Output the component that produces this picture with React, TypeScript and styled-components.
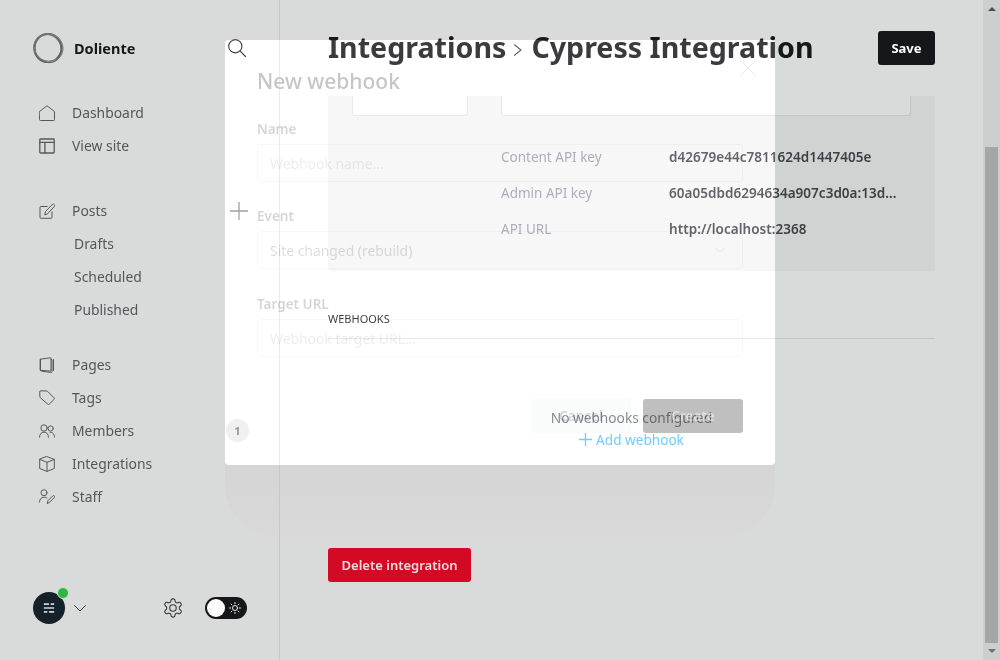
import React from "react";
import styled, { createGlobalStyle } from "styled-components";

const Global = createGlobalStyle`
  html, body { margin: 0; padding: 0; background: #d9dbda; overflow: hidden; }
  * { box-sizing: border-box; }
  body { font-family: "Noto Sans", "Open Sans", sans-serif; }
`;

const Shell = styled.div`
  width: 1000px; height: 660px; background: #d9dbda; overflow: hidden; position: relative;
`;
const ModalShadow = styled.div`
  position: absolute; left: 225px; top: 465px; width: 550px; height: 72px;
  border-radius: 0 0 52px 52px;
  background: linear-gradient(#d5d5d5, #d8d9d8);
`;
const Page = styled.div`
  position: relative; display: flex; width: 1000px; height: 660px;
`;
const Sidebar = styled.aside`
  width: 280px; height: 660px; border-right: 1px solid #c6c8c7;
  padding: 32px 31px 36px 32px; display: flex; flex-direction: column;
`;
const BrandRow = styled.div`
  display: flex; align-items: center; height: 32px; margin-bottom: 32px;
`;
const BrandName = styled.span`
  margin-left: 10px; font-size: 14.5px; font-weight: 700; color: #15171a; flex: 1;
`;
const SearchIcon = styled.svg`
  width: 18px; height: 18px; margin-right: 2px; color: #15171a;
`;
const NavGroup = styled.nav<{ $after?: number }>`
  display: flex; flex-direction: column; margin-bottom: ${p => p.$after ?? 0}px;
`;
const NavRow = styled.div`
  display: flex; align-items: center; height: 33px; padding-left: 7px;
  font-size: 13.9px; color: #53575c;
`;
const SubRow = styled.div`
  display: flex; align-items: center; height: 33px; padding-left: 42px;
  font-size: 13.9px; color: #53575c;
`;
const NavIcon = styled.svg`
  width: 16px; height: 16px; margin-right: 17px; flex: none; color: #54585d;
  fill: none; stroke: currentColor; stroke-width: 1; stroke-linecap: round; stroke-linejoin: round;
`;
const NavLabel = styled.span`flex: 1;`;
const PlusIcon = styled.svg`
  width: 18px; height: 18px; color: #7a7d80;
`;
const Badge = styled.span`
  width: 23px; height: 23px; margin-right: -1px; border-radius: 50%; background: #cacbcd; color: #6f7378;
  font-size: 11px; font-weight: 700; display: flex; align-items: center; justify-content: center;
`;
const Footer = styled.div`
  margin-top: auto; height: 32px; display: flex; align-items: center; position: relative;
`;
const Avatar = styled.div`
  width: 32px; height: 32px; margin-left: 1px; border-radius: 50%; background: #15212a; position: relative;
  display: flex; align-items: center; justify-content: center;
`;
const Online = styled.span`
  position: absolute; top: -5px; right: -4px; width: 12px; height: 12px; border-radius: 50%;
  background: #2db83d; border: 1px solid #d9dbda;
`;
const Chevron = styled.svg`
  width: 14px; height: 14px; margin-left: 8px; color: #3a3d40;
`;
const Gear = styled.svg`
  width: 22px; height: 22px; margin-left: 75px; color: #33363a;
`;
const Toggle = styled.div`
  width: 42px; height: 22px; margin-left: 21px; border-radius: 11px; background: #15171a;
  display: flex; align-items: center; padding: 2px 6px 2px 2px; justify-content: space-between;
`;
const Knob = styled.span`
  width: 18px; height: 18px; border-radius: 50%; background: #fff;
`;
const Sun = styled.svg`
  width: 12px; height: 12px; color: #e8e8e8;
`;

const Main = styled.main`
  flex: 1; min-width: 0; padding: 0 48px; display: flex; flex-direction: column;
`;
const Header = styled.header`
  height: 96px; display: flex; align-items: center; justify-content: space-between; flex: none;
`;
const Title = styled.h1`
  margin: -4px 0 0; font-size: 28.6px; font-weight: 700; color: #15171a; display: flex; align-items: center; white-space: nowrap;
`;
const Crumb = styled.svg`
  width: 12px; height: 12px; margin: 7px 7px 0 6px; color: #3a3d40;
`;
const SaveButton = styled.button`
  height: 34px; width: 57px; border: 0; border-radius: 3px; background: #15171a; color: #fff;
  font: 700 13px "Noto Sans", sans-serif; padding: 0;
`;
const Panel = styled.section`
  height: 175px; flex: none; padding: 0 24px; background: rgba(0,0,0,.035);
  border-radius: 0 0 3px 3px; display: grid; grid-template-columns: 116px 1fr; column-gap: 33px; align-content: start;
`;
const CutBox = styled.div`
  height: 20px; background: rgb(8,8,8); mix-blend-mode: plus-lighter;
  border-radius: 0 0 3px 3px;
`;
const CutEdge = styled.div`
  height: 20px; border: 1px solid #c3c5c4; border-top: 0; border-radius: 0 0 3px 3px;
  position: relative; margin-top: -20px;
`;
const Keys = styled.dl`
  grid-column: 2; margin: 23px 0 0; display: grid; grid-template-columns: 168px 1fr; grid-auto-rows: 36px; align-items: center;
`;
const KeyName = styled.dt`
  font-size: 13.5px; color: #858a96;
`;
const KeyValue = styled.dd`
  margin: 0; font-size: 13.5px; font-weight: 600; color: #3c3f44; white-space: nowrap; letter-spacing: .03px;
`;
const SectionHead = styled.div`
  margin-top: 41px; padding-bottom: 12px; border-bottom: 1px solid #c4c6c5;
  font-size: 11px; line-height: 14px; color: #15171a; flex: none;
`;
const Empty = styled.div`
  margin-top: 68px; display: flex; flex-direction: column; align-items: center; flex: none;
`;
const EmptyText = styled.div`
  height: 21px; line-height: 21px; font-size: 13.7px; color: #64696f;
`;
const AddLink = styled.div`
  height: 22px; display: flex; align-items: center; font-size: 13.6px; color: #48a8e4;
`;
const AddPlus = styled.svg`
  width: 13px; height: 13px; margin-right: 4px;
`;
const DeleteButton = styled.button`
  margin-top: 98px; height: 34px; width: 143px; flex: none; border: 0; border-radius: 3px; padding: 0 0 0 0;
  background: #d20a24; color: #ecdcdd; font: 600 13px "Noto Sans", sans-serif;
`;

const Scrollbar = styled.div`
  width: 17px; height: 660px; background: #cdcfce; flex: none; display: flex; flex-direction: column; align-items: center;
`;
const Arrow = styled.span<{ $down?: boolean }>`
  flex: none; width: 0; height: 0; margin-top: ${p => (p.$down ? 6 : 7)}px;
  border-left: 4px solid transparent; border-right: 4px solid transparent;
  ${p => (p.$down ? "border-top: 4px solid #6e6f6f;" : "border-bottom: 4px solid #4f5050;")}
`;
const Thumb = styled.div`
  width: 13px; height: 496px; margin-top: 136px; background: #a5a7a6; flex: none;
`;

const Modal = styled.div`
  position: absolute; left: 225px; top: 40px; width: 550px; height: 425px;
`;
const ModalGlow = styled.div`
  position: absolute; inset: 0; border-radius: 4px; background: rgb(38,36,37); mix-blend-mode: plus-lighter;
`;
const ModalBody = styled.div`
  position: absolute; inset: 0; padding: 26px 32px 32px; display: flex; flex-direction: column;
`;
const ModalTitle = styled.h2`
  margin: 0 0 23px; height: 30px; line-height: 30px; font-size: 21px; font-weight: 500; color: #c5c6c6;
`;
const CloseIcon = styled.svg`
  position: absolute; top: 20px; right: 19px; width: 16px; height: 16px; color: #e6e6e6;
`;
const Field = styled.div<{ $gap?: number }>`
  display: flex; flex-direction: column; margin-bottom: ${p => p.$gap ?? 24}px;
`;
const FieldLabel = styled.div`
  height: 20px; line-height: 20px; margin-bottom: 5px; font-size: 13.5px; font-weight: 600; color: rgba(0,0,0,.17);
`;
const FieldBox = styled.div<{ $strong?: boolean }>`
  height: 38px; border: 1px solid rgba(0,0,0,.03); border-radius: 3px; padding: 0 12px;
  display: flex; align-items: center; justify-content: space-between;
  font-size: 13.9px; color: ${p => (p.$strong ? "rgba(0,0,0,.14)" : "rgba(20,40,60,.09)")};
`;
const SelectChevron = styled.svg`
  width: 12px; height: 12px; margin-right: 4px; color: #e2e2e2;
`;
const ModalActions = styled.div`
  margin-top: auto; display: flex; justify-content: flex-end; gap: 12px;
`;
const CancelButton = styled.button`
  width: 100px; height: 34px; border: 0; border-radius: 3px; padding: 0; background: rgba(20,60,40,.02);
  color: rgba(0,20,20,.16); font: 600 13.5px "Noto Sans", sans-serif;
`;
const CreateButton = styled.button`
  width: 100px; height: 34px; border: 0; border-radius: 3px; padding: 0; background: rgba(0,0,0,.25);
  color: rgba(255,255,255,.5); font: 600 13.5px "Noto Sans", sans-serif;
`;

const Logo = () => (
  <svg width="32" height="32" viewBox="0 0 32 32" fill="none" style={{ flex: "none" }}>
    <ellipse cx="16" cy="16" rx="13.6" ry="14" stroke="#4f5152" strokeWidth="2.200" />
    <ellipse cx="16.4" cy="15.6" rx="14.4" ry="13.6" stroke="#808282" strokeWidth="1.400" transform="rotate(24 16 16)" />
    <ellipse cx="15.6" cy="16.4" rx="13" ry="14.600" stroke="#6c6e6e" strokeWidth="1" transform="rotate(-30 16 16)" />
  </svg>
);

const items = {
  home: <path d="M.5 6.6 8 .7l7.500 5.900v8.100a.8.8 0 0 1-.8.8H1.300a.8.8 0 0 1-.8-.8z" />,
  layout: <g strokeWidth="1.300"><rect x=".8" y="1" width="14.400" height="14" rx=".8" /><path d="M.8 4.300h14.400M5.900 4.300V15" /></g>,
  post: <g><path d="M8.200 3.500H2a1 1 0 0 0-1 1v9.800a1 1 0 0 0 1 1h10a1 1 0 0 0 1-1V8.800" /><path d="M5.800 11.500l.7-3L13.500 1.300a1 1 0 0 1 1.400 0l.6.6a1 1 0 0 1 0 1.400L8.600 10.700z" /></g>,
  page: <g><path d="M1.500 2.200 11 .8a.8.8 0 0 1 1 .8v12.500l-10.500-.8z" /><path d="M1.500 2.200v10.900a1 1 0 0 0 .9 1l9.300 1.400a1 1 0 0 0 1.300-1V3.300a1 1 0 0 0-1-1H11.900M14.500 2.500v11" /></g>,
  tag: <g><path d="M.7 1.800a1 1 0 0 1 1-1l5.800.2a2 2 0 0 1 1.300.6l6.300 6.300a1 1 0 0 1 0 1.400l-4.900 4.900a1 1 0 0 1-1.400 0L1.500 7.900A2 2 0 0 1 .9 6.600z" /></g>,
  members: <g><circle cx="5" cy="5" r="3.200" /><path d="M.5 14.200c0-3 1.800-5 4.500-5s4.500 2 4.500 5" /><circle cx="11.700" cy="5.500" r="2.600" /><path d="M11 9.300c2.600-.4 4.500 1.700 4.500 4.900" /></g>,
  cube: <g><path d="M8 .6l7.300 2.800v9.100L8 15.400.7 12.500V3.400z" /><path d="M.7 3.400 8 6.300l7.300-2.900M8 6.300v9.100" /></g>,
  staff: <g><circle cx="5" cy="3.700" r="3" /><path d="M.5 13c0-3 2-4.800 4.500-4.800 1.200 0 2.200.3 3 1" /><path d="M8.300 14.200l.6-2.400 4.900-4.900a1.100 1.100 0 0 1 1.600 1.600l-4.900 4.900z" /></g>,
};

const Item = ({ icon, label, children }: { icon: keyof typeof items; label: string; children?: React.ReactNode }) => (
  <NavRow>
    <NavIcon viewBox="0 0 16 16">{items[icon]}</NavIcon>
    <NavLabel>{label}</NavLabel>
    {children}
  </NavRow>
);

export default function App() {
  return (
    <Shell>
      <Global />
      <ModalShadow />
      <Page>
        <Sidebar>
          <BrandRow>
            <Logo />
            <BrandName>Doliente</BrandName>
            <SearchIcon viewBox="0 0 18 18" fill="none" stroke="currentColor" strokeWidth="1.100" strokeLinecap="round">
              <circle cx="7.300" cy="7.300" r="6.600" />
              <path d="M12.200 12.200 17.500 17.500" />
            </SearchIcon>
          </BrandRow>
          <NavGroup $after={32}>
            <Item icon="home" label="Dashboard" />
            <Item icon="layout" label="View site" />
          </NavGroup>
          <NavGroup $after={22}>
            <Item icon="post" label="Posts">
              <PlusIcon viewBox="0 0 18 18" fill="none" stroke="currentColor" strokeWidth="1.300">
                <path d="M9 0v18M0 9h18" />
              </PlusIcon>
            </Item>
            <SubRow>Drafts</SubRow>
            <SubRow>Scheduled</SubRow>
            <SubRow>Published</SubRow>
          </NavGroup>
          <NavGroup>
            <Item icon="page" label="Pages" />
            <Item icon="tag" label="Tags" />
            <Item icon="members" label="Members">
              <Badge>1</Badge>
            </Item>
            <Item icon="cube" label="Integrations" />
            <Item icon="staff" label="Staff" />
          </NavGroup>
          <Footer>
            <Avatar>
              <svg width="12" height="12" viewBox="0 0 14 14" fill="#cfd3d6">
                <path d="M1 1.500h6v2H1zM9 1.500h4v2H9zM1 6h12v2H1zM1 10.500h4v2H1zM7 10.500h6v2H7z" />
              </svg>
              <Online />
            </Avatar>
            <Chevron viewBox="0 0 14 14" fill="none" stroke="currentColor" strokeWidth="1" strokeLinecap="round">
              <path d="M1.500 4.500 7 10l5.500-5.500" />
            </Chevron>
            <Gear viewBox="0 0 24 24" fill="none" stroke="currentColor" strokeWidth="1.200" strokeLinecap="round" strokeLinejoin="round">
              <path d="M12.220 2h-.44a2 2 0 0 0-2 2v.18a2 2 0 0 1-1 1.730l-.43.250a2 2 0 0 1-2 0l-.150-.080a2 2 0 0 0-2.730.730l-.220.380a2 2 0 0 0 .730 2.730l.150.100a2 2 0 0 1 1 1.720v.510a2 2 0 0 1-1 1.740l-.150.090a2 2 0 0 0-.730 2.730l.220.380a2 2 0 0 0 2.730.730l.150-.080a2 2 0 0 1 2 0l.430.250a2 2 0 0 1 1 1.730V20a2 2 0 0 0 2 2h.44a2 2 0 0 0 2-2v-.18a2 2 0 0 1 1-1.730l.430-.250a2 2 0 0 1 2 0l.150.080a2 2 0 0 0 2.730-.730l.220-.390a2 2 0 0 0-.730-2.730l-.150-.080a2 2 0 0 1-1-1.740v-.500a2 2 0 0 1 1-1.740l.150-.090a2 2 0 0 0 .730-2.730l-.220-.380a2 2 0 0 0-2.730-.730l-.150.080a2 2 0 0 1-2 0l-.430-.250a2 2 0 0 1-1-1.730V4a2 2 0 0 0-2-2z" />
              <circle cx="12" cy="12" r="3.500" />
            </Gear>
            <Toggle>
              <Knob />
              <Sun viewBox="0 0 12 12" fill="none" stroke="currentColor" strokeWidth="1" strokeLinecap="round">
                <circle cx="6" cy="6" r="2.500" />
                <path d="M6 .5v1.200M6 10.300v1.200M.5 6h1.200M10.300 6h1.200M2.100 2.100l.9.9M9 9l.9.9M2.100 9.900l.9-.9M9 3l.9-.9" />
              </Sun>
            </Toggle>
          </Footer>
        </Sidebar>
        <Main>
          <Header>
            <Title>
              Integrations
              <Crumb viewBox="0 0 12 12" fill="none" stroke="currentColor" strokeWidth="1.100" strokeLinecap="round">
                <path d="M2.500 .8 9 6l-6.500 5.200" />
              </Crumb>
              Cypress Integration
            </Title>
            <SaveButton>Save</SaveButton>
          </Header>
          <Panel>
            <div><CutBox /><CutEdge /></div>
            <div><CutBox /><CutEdge /></div>
            <Keys>
              <KeyName>Content API key</KeyName>
              <KeyValue>d42679e44c7811624d1447405e</KeyValue>
              <KeyName>Admin API key</KeyName>
              <KeyValue>60a05dbd6294634a907c3d0a:13d...</KeyValue>
              <KeyName>API URL</KeyName>
              <KeyValue>http://localhost:2368</KeyValue>
            </Keys>
          </Panel>
          <SectionHead>WEBHOOKS</SectionHead>
          <Empty>
            <EmptyText>No webhooks configured</EmptyText>
            <AddLink>
              <AddPlus viewBox="0 0 13 13" fill="none" stroke="currentColor" strokeWidth="1.300">
                <path d="M6.500 0v13M0 6.500h13" />
              </AddPlus>
              Add webhook
            </AddLink>
          </Empty>
          <DeleteButton>Delete integration</DeleteButton>
        </Main>
        <Scrollbar>
          <Arrow />
          <Thumb />
          <Arrow $down />
        </Scrollbar>
      </Page>
      <Modal>
        <ModalGlow />
        <ModalBody>
          <ModalTitle>New webhook</ModalTitle>
          <CloseIcon viewBox="0 0 16 16" fill="none" stroke="currentColor" strokeWidth="1">
            <path d="M.5.500l15 15M15.500.500l-15 15" />
          </CloseIcon>
          <Field>
            <FieldLabel>Name</FieldLabel>
            <FieldBox>Webhook name...</FieldBox>
          </Field>
          <Field $gap={25}>
            <FieldLabel>Event</FieldLabel>
            <FieldBox $strong>
              Site changed (rebuild)
              <SelectChevron viewBox="0 0 12 12" fill="none" stroke="currentColor" strokeWidth="1">
                <path d="M1 3.500 6 8.500l5-5" />
              </SelectChevron>
            </FieldBox>
          </Field>
          <Field>
            <FieldLabel>Target URL</FieldLabel>
            <FieldBox>Webhook target URL...</FieldBox>
          </Field>
          <ModalActions>
            <CancelButton>Cancel</CancelButton>
            <CreateButton>Create</CreateButton>
          </ModalActions>
        </ModalBody>
      </Modal>
    </Shell>
  );
}
